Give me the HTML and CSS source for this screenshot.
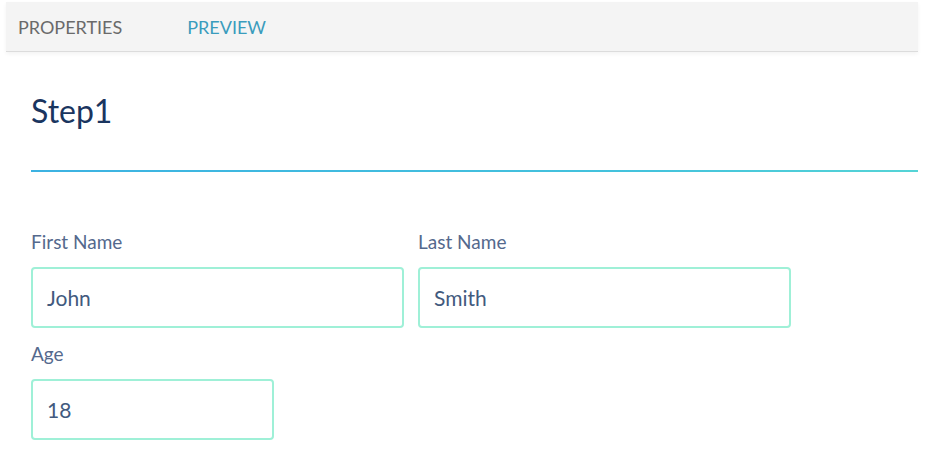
FILE: index.html
```html
<!DOCTYPE html>
<html>
<head>
<meta charset="utf-8">
<link rel="stylesheet" href="styles.css">
</head>
<body>
<div class="tabs">
  <span class="tab">PROPERTIES</span>
  <span class="tab active">PREVIEW</span>
</div>
<div class="content">
  <h1 class="title">Step1</h1>
  <div class="rule"></div>
  <div class="form">
    <div class="row">
      <div class="field wide">
        <label class="label">First Name</label>
        <div class="input">John</div>
      </div>
      <div class="field wide">
        <label class="label">Last Name</label>
        <div class="input">Smith</div>
      </div>
    </div>
    <div class="row">
      <div class="field narrow">
        <label class="label">Age</label>
        <div class="input">18</div>
      </div>
    </div>
  </div>
</div>
</body>
</html>
```
FILE: styles.css
```css
html, body {
  margin: 0;
  padding: 0;
  background: #ffffff;
  font-family: "Lato", "Open Sans", sans-serif;
}
.tabs {
  margin: 2px 25px 0 6px;
  height: 50px;
  background: #f4f4f4;
  border-bottom: 1px solid #dcdcdc;
  box-shadow: 0 2px 4px rgba(0, 0, 0, 0.05);
  display: flex;
  align-items: center;
  padding-left: 12px;
  gap: 65px;
  box-sizing: border-box;
}
.tab {
  font-size: 18px;
  color: #6a6a6a;
}
.tab.active {
  color: #3a9cbd;
}
.content {
  padding: 0 25px 0 31px;
}
.title {
  margin: 40px 0 0 0;
  font-weight: 400;
  font-size: 32px;
  color: #1a355f;
  line-height: 38px;
  height: 38px;
}
.rule {
  margin-top: 40px;
  height: 2px;
  background: linear-gradient(90deg, #3cb2e2 0%, #44c3dc 70%, #55d4d6 100%);
}
.form {
  margin-top: 58px;
  display: flex;
  flex-direction: column;
  gap: 14px;
}
.row {
  display: flex;
  gap: 14px;
}
.field {
  display: flex;
  flex-direction: column;
}
.wide { width: 373px; }
.narrow { width: 243px; }
.label {
  font-size: 19px;
  color: #54698d;
  height: 23px;
  line-height: 23px;
  margin-bottom: 14px;
}
.input {
  height: 61px;
  box-sizing: border-box;
  border: 2px solid #9ff0d7;
  border-radius: 4px;
  padding-left: 14px;
  display: flex;
  align-items: center;
  font-size: 21px;
  color: #425a7e;
}
```
